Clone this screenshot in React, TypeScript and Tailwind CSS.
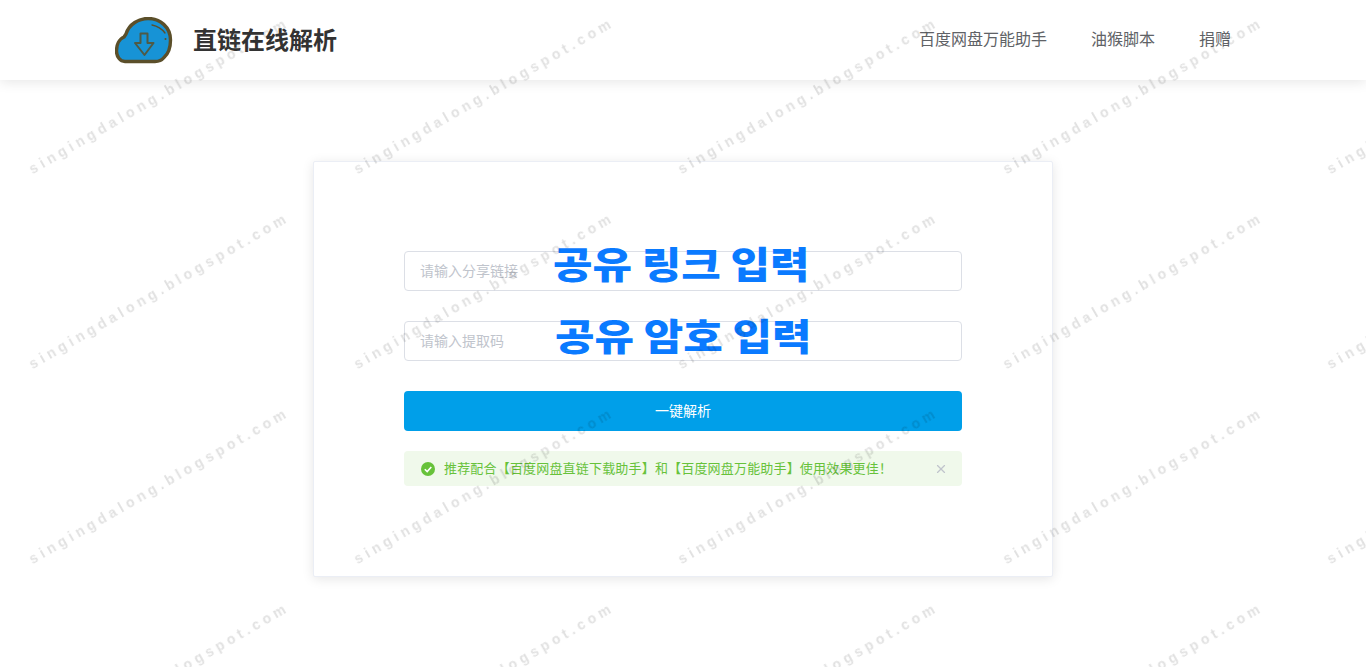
import React from 'react';
import { X } from 'lucide-react';

const cjk = "font-['Noto_Sans_CJK_SC','Liberation_Sans',sans-serif]";

// Watermark is a repeating slanted string over the whole page
const markXs = [30, 354.5, 679, 1003.5, 1328];
const markYs = [170, 365, 560, 755];

const Logo: React.FC = () => (
    <svg width="58" height="47" viewBox="0 0 58 47" fill="none">
        <path
            d="M11 17 C14 7 24 1.5 33 1.5 C45 1.5 55.5 10 55.5 23 C55.5 31 53 37 49 40.5 C47 43 44 44.5 40 44.5 L10 44.5 C5 44.5 1.5 39.5 1.5 34 C1.5 28 4 22 9 20 Z"
            fill="#1793d6"
            stroke="#5b4f2a"
            strokeWidth="3.4"
            strokeLinejoin="round"
        />
        <path
            d="M25.5 16.5 L32.5 16.5 L32.5 26 L38.5 26 L29.5 38 L20 26 L25.5 26 Z"
            stroke="#4f5a45"
            strokeWidth="2"
            strokeLinejoin="round"
        />
        <path d="M37 8 C42 9 47 12 50 16" stroke="#5b4f2a" strokeWidth="1.3" strokeLinecap="round" />
        <circle cx="50.5" cy="22" r="1" fill="#5b4f2a" />
    </svg>
);

const CheckCircle: React.FC = () => (
    <svg width="14" height="14" viewBox="0 0 14 14">
        <circle cx="7" cy="7" r="7" fill="#67c23a" />
        <path d="M3.8 7.2 L6.2 9.6 L10.3 5" fill="none" stroke="#ffffff" strokeWidth="1.6" />
    </svg>
);

const App: React.FC = () => {
    return (
        <div className={`relative min-h-[667px] bg-white ${cjk}`}>
            <header className="flex h-20 items-center justify-between bg-white pl-[115px] pr-[135px] shadow-[0_2px_12px_rgba(0,0,0,0.1)]">
                <div className="flex items-center gap-[20px]">
                    <Logo />
                    <h1 className="pb-[2px] text-2xl font-bold text-[#333333]">直链在线解析</h1>
                </div>
                <nav className="flex gap-[44px] pb-1 text-base text-[#606266]">
                    <a>百度网盘万能助手</a>
                    <a>油猴脚本</a>
                    <a>捐赠</a>
                </nav>
            </header>

            <main className="relative mx-auto mt-[81px] w-[740px] rounded-[2px] border border-[#ebeef5] bg-white px-[90px] pb-[90px] pt-[89px] shadow-[0_2px_12px_rgba(0,0,0,0.1)]">
                <div className="flex flex-col gap-[30px]">
                    <input
                        placeholder="请输入分享链接"
                        className="h-10 w-full rounded border border-[#dcdfe6] bg-white px-[15px] pb-[2px] text-sm outline-none placeholder:text-[#c0c4cc]"
                    />
                    <input
                        placeholder="请输入提取码"
                        className="h-10 w-full rounded border border-[#dcdfe6] bg-white px-[15px] pb-[2px] text-sm outline-none placeholder:text-[#c0c4cc]"
                    />
                    <button className="h-10 w-full rounded bg-[#009fe9] pb-[2px] text-sm text-white">一键解析</button>
                </div>
                <div className="mt-5 flex h-[35px] items-center rounded bg-[#f0f9eb] pl-[17px] pr-[14px] text-[13px] text-[#67c23a]">
                    <CheckCircle />
                    <span className="ml-[9px] flex-1 pb-[2px] tracking-[0.18px]">推荐配合【百度网盘直链下载助手】和【百度网盘万能助手】使用效果更佳！</span>
                    <X size={14} className="text-[#c0c4cc]" />
                </div>

                {/* Korean captions pasted over the two inputs */}
                <div className="absolute left-[239px] top-[79px] origin-left scale-x-[1.16] whitespace-nowrap font-['Noto_Sans_CJK_KR',sans-serif] text-[37px] font-black leading-[44px] text-[#0a7aff]">
                    공유 링크 입력
                </div>
                <div className="absolute left-[241px] top-[151px] origin-left scale-x-[1.16] whitespace-nowrap font-['Noto_Sans_CJK_KR',sans-serif] text-[37px] font-black leading-[44px] text-[#0a7aff]">
                    공유 암호 입력
                </div>
            </main>

            <div className="pointer-events-none fixed inset-0 overflow-hidden">
                {markYs.map(y =>
                    markXs.map(x => (
                        <span
                            key={`${x}-${y}`}
                            className="absolute origin-left -rotate-30 whitespace-nowrap font-['Liberation_Sans',sans-serif] text-sm font-bold leading-none tracking-[4.1px] text-black/12 blur-[0.7px]"
                            style={{ left: x, top: y - 7 }}
                        >
                            singingdalong.blogspot.com
                        </span>
                    ))
                )}
            </div>
        </div>
    );
};

export default App;
